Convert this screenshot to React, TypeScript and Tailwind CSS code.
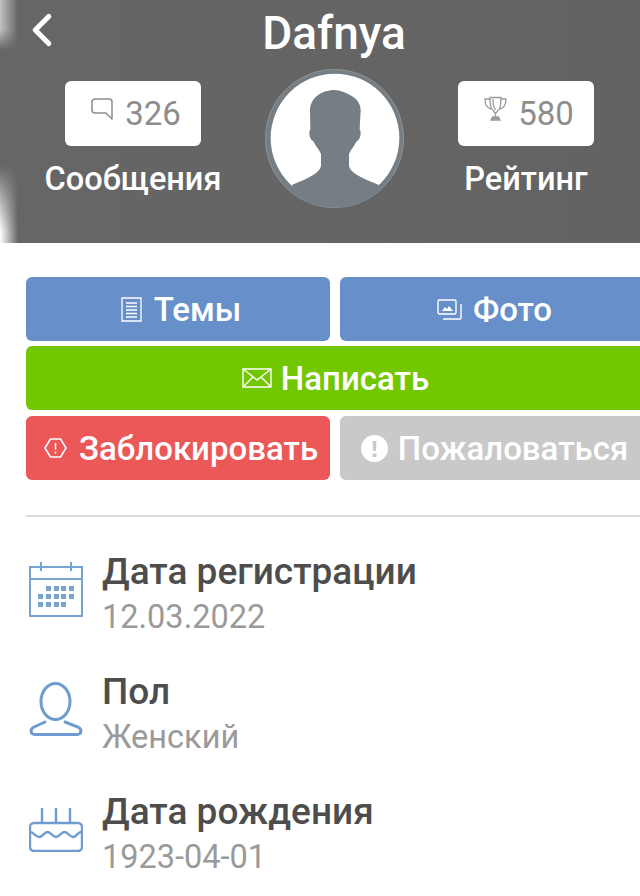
import { ChevronLeft } from 'lucide-react';

function Avatar() {
  return (
    <svg viewBox="15 15 417 417" className="w-[139px] h-[139px] shrink-0 ml-[44px]">
      <defs>
        <clipPath id="avatar-clip">
          <circle cx="223.5" cy="223.5" r="207" />
        </clipPath>
      </defs>
      <circle cx="223.5" cy="223.5" r="207" fill="#777e83" stroke="#8f9598" strokeWidth="3" />
      <circle cx="225" cy="222" r="193" fill="#ffffff" />
      <path
        clipPath="url(#avatar-clip)"
        d="M225 78C245 80 262 88 275 96C292 106 302 120 302 140L299 195C305 205 302 225 290 232C284 245 272 258 267 270V305C270 325 300 340 355 362V450H97V362C152 340 180 325 183 305V270C178 258 166 245 160 232C148 225 145 205 151 195L150 140C150 105 180 78 225 78Z"
        fill="#777e83"
      />
    </svg>
  );
}

function Stat({ icon, value, label, className = '' }: { icon: React.ReactNode; value: string; label: string; className?: string }) {
  return (
    <div className={`w-[176px] pt-[12px] flex flex-col items-center shrink-0 ${className}`}>
      <div className="w-[136px] h-[65px] pl-[6px] bg-white rounded-md flex items-center justify-center text-[#8d8d8d] text-[33px] leading-none">
        {icon}
        <span>{value}</span>
      </div>
      <div className="mt-[14px] text-white text-[32.500px] font-medium leading-[38px] whitespace-nowrap">{label}</div>
    </div>
  );
}

function ActionButton({ className, icon, label }: { className: string; icon: React.ReactNode; label: string }) {
  return (
    <div className={`h-[64px] rounded-md flex items-center justify-center text-white text-[33px] font-medium leading-none whitespace-nowrap ${className}`}>
      {icon}
      <span>{label}</span>
    </div>
  );
}

function InfoRow({ icon, title, value }: { icon: React.ReactNode; title: string; value: string }) {
  return (
    <div className="flex items-start h-[90px]">
      <div className="w-[76px] pl-[3px] pt-[14px] shrink-0">{icon}</div>
      <div>
        <div className="text-[#4d4d4d] text-[37px] font-medium leading-[47px] whitespace-nowrap">{title}</div>
        <div className="text-[#9a9a9a] text-[32.500px] leading-[44px]">{value}</div>
      </div>
    </div>
  );
}

export default function App() {
  return (
    <div className="w-[640px] h-[896px] overflow-hidden bg-white" style={{ fontFamily: 'Roboto, sans-serif' }}>
      {/* Header */}
      <header className="relative h-[243px] overflow-hidden bg-gradient-to-r from-[#666666] to-[#636363]">
        <div className="absolute left-0 top-0 w-[18px] h-[50px] bg-gradient-to-r from-white/60 to-transparent [mask-image:linear-gradient(to_bottom,black_60%,transparent)]" />
        <div className="absolute left-0 top-[165px] w-[18px] h-[78px] bg-gradient-to-r from-white to-transparent [mask-image:linear-gradient(to_bottom,transparent,black_85%)]" />
        <ChevronLeft className="absolute left-[15px] top-[3px] w-[54px] h-[54px] text-white" strokeWidth={2.3} />
        <div className="pt-[7px] pl-[28px] text-center text-white text-[46px] font-medium leading-[52px]">Dafnya</div>
        <div className="mt-[10px] flex items-start pl-[45px]">
          <Stat
            value="326"
            label="Сообщения"
            icon={
              <svg viewBox="0 0 22 22" className="w-[22px] h-[22px] mb-[10px] mr-[12px]" fill="none" stroke="#8d8d8d" strokeWidth="1.5">
                <path d="M4 1h14a3 3 0 0 1 3 3v17l-6-6H4a3 3 0 0 1-3-3V4a3 3 0 0 1 3-3z" strokeLinejoin="round" />
              </svg>
            }
          />
          <Avatar />
          <Stat
            className="ml-[34px]"
            value="580"
            label="Рейтинг"
            icon={
              <svg viewBox="0 0 23 25" className="w-[23px] h-[25px] mb-[10px] mr-[11px]" fill="none" stroke="#9a9a9a" strokeWidth="1.3">
                <path d="M6 1.500h11c0 5 0 11-3 13l-1.500 2H10.500l-1.500-2c-3-2-3-8-3-13z" />
                <path d="M9 3c0 4 0 8 2.500 11M6 3H1c0 5 2 9 6 10M17 3h5c0 5-2 9-6 10M11.500 17v4" />
                <path d="M7 24h9l-1.500-3h-6z" fill="#9a9a9a" />
              </svg>
            }
          />
        </div>
      </header>

      {/* Buttons */}
      <div className="w-[623px] ml-[26px] mt-[34px] flex flex-col">
        <div className="grid grid-cols-[304px_1fr] gap-[10px]">
          <ActionButton
            className="bg-[#678fca] pl-[6px]"
            label="Темы"
            icon={
              <svg viewBox="0 0 21 25" className="w-[21px] h-[25px] mr-[12px]" fill="none" stroke="white" strokeWidth="1.3">
                <path d="M1 1h19v23H1zM5 6h11M5 9.500h11M5 13h11M5 16.500h11M5 20h11" />
              </svg>
            }
          />
          <ActionButton
            className="bg-[#678fca]"
            label="Фото"
            icon={
              <svg viewBox="0 0 25 21" className="w-[25px] h-[21px] mr-[11px]" fill="none" stroke="white" strokeWidth="1.4">
                <path d="M2.500 1h15a1.500 1.500 0 0 1 1.500 1.500v11a1.500 1.500 0 0 1-1.500 1.500h-15a1.500 1.500 0 0 1-1.500-1.500v-11a1.500 1.500 0 0 1 1.500-1.500z" />
                <path d="M24 5v14a1 1 0 0 1-1 1H6" />
                <path d="M5 12l3-4 2 2 2-3 4 5z" fill="white" stroke="none" />
              </svg>
            }
          />
        </div>
        <ActionButton
          className="bg-[#72c700] mt-[5px] pr-[4px]"
          label="Написать"
          icon={
            <svg viewBox="0 0 30 20" className="w-[30px] h-[20px] mr-[9px]" fill="none" stroke="white" strokeWidth="1.4">
              <path d="M1 1h28v18H1zM1 1l14 11L29 1M1 19l10-10M29 19L19 9" />
            </svg>
          }
        />
        <div className="grid grid-cols-[304px_1fr] gap-[10px] mt-[6px]">
          <ActionButton
            className="bg-[#ec5757] pl-[6px]"
            label="Заблокировать"
            icon={
              <svg viewBox="0 0 23 20" className="w-[23px] h-[20px] mr-[12px]" fill="none" stroke="white" strokeWidth="1.5">
                <path d="M6.500 1h10l5.500 9-5.500 9h-10L1 10z" strokeLinejoin="round" />
                <path d="M11.500 5v6.500M11.500 13.500v2" />
              </svg>
            }
          />
          <ActionButton
            className="bg-[#c9c9c9]"
            label="Пожаловаться"
            icon={
              <svg viewBox="0 0 27 27" className="w-[27px] h-[27px] mr-[10px]">
                <circle cx="13.500" cy="13.500" r="13.500" fill="white" />
                <path d="M11.500 6h4l-.7 10h-2.600zM11.500 18.500h4v3.500h-4z" fill="#c9c9c9" />
              </svg>
            }
          />
        </div>
      </div>

      <div className="ml-[26px] mt-[35px] h-[2px] bg-[#dcdcdc]" />

      {/* Profile info */}
      <div className="ml-[26px] mt-[31px] flex flex-col gap-[30px]">
        <InfoRow
          title="Дата регистрации"
          value="12.03.2022"
          icon={
            <svg viewBox="0 0 54 55" className="w-[54px] h-[55px]" fill="none" stroke="#76a3cf" strokeWidth="2">
              <path d="M1 5h52v49H1zM1 17h52M12 0v9M42 0v9" />
              <g fill="#76a3cf" stroke="none">
                <rect x="17" y="24" width="5" height="5" /><rect x="25" y="24" width="5" height="5" /><rect x="32" y="24" width="5" height="5" /><rect x="40" y="24" width="5" height="5" />
                <rect x="9" y="32" width="5" height="5" /><rect x="17" y="32" width="5" height="5" /><rect x="25" y="32" width="5" height="5" /><rect x="32" y="32" width="5" height="5" /><rect x="40" y="32" width="5" height="5" />
                <rect x="9" y="40" width="5" height="5" /><rect x="17" y="40" width="5" height="5" /><rect x="25" y="40" width="5" height="5" /><rect x="32" y="40" width="5" height="5" />
              </g>
            </svg>
          }
        />
        <InfoRow
          title="Пол"
          value="Женский"
          icon={
            <svg viewBox="0 0 54 54" className="w-[54px] h-[54px]" fill="none" stroke="#6f9bd0" strokeWidth="3" strokeLinecap="round">
              <ellipse cx="26.500" cy="19.500" rx="14.500" ry="18" />
              <path d="M16 40L5 45c-4 2-4 7.500 1 7.500h42c5 0 5-5.500 1-7.500L36 40" />
            </svg>
          }
        />
        <InfoRow
          title="Дата рождения"
          value="1923-04-01"
          icon={
            <svg viewBox="0 0 54 46" className="w-[54px] h-[46px] mt-[4px]" fill="none" stroke="#6f9bd0" strokeWidth="2.400" strokeLinecap="round">
              <rect x="1" y="17" width="52" height="28" rx="4" />
              <path d="M1 26c4 0 5 5 9 5s5-5 8.500-5 5 5 8.500 5 5-5 8.500-5 5 5 8.500 5 5-5 8-5" />
              <path d="M13 15V3M27 15V3M41 15V3" />
            </svg>
          }
        />
      </div>
    </div>
  );
}
